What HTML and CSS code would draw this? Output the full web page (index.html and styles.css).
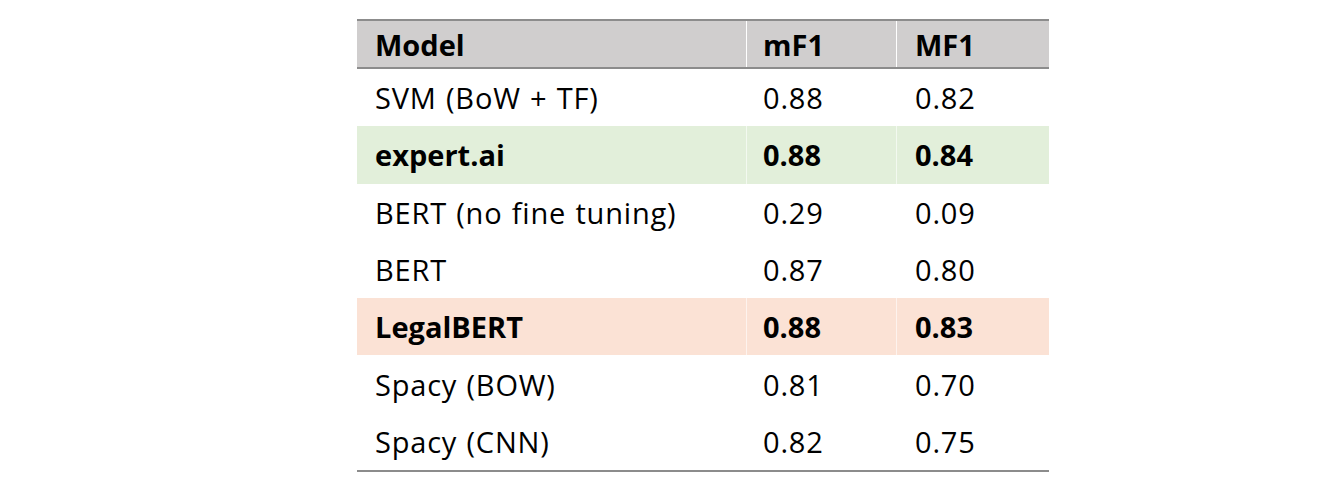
FILE: index.html
```html
<!DOCTYPE html>
<html>
<head>
<meta charset="utf-8">
<link rel="stylesheet" href="styles.css">
</head>
<body>
<div class="page">
  <table class="results">
    <thead>
      <tr><th class="c-model">Model</th><th class="c-m">mF1</th><th class="c-M">MF1</th></tr>
    </thead>
    <tbody>
      <tr><td>SVM (BoW + TF)</td><td class="c-m">0.88</td><td class="c-M">0.82</td></tr>
      <tr class="hl-green"><td>expert.ai</td><td class="c-m">0.88</td><td class="c-M">0.84</td></tr>
      <tr><td>BERT (no fine tuning)</td><td class="c-m">0.29</td><td class="c-M">0.09</td></tr>
      <tr><td>BERT</td><td class="c-m">0.87</td><td class="c-M">0.80</td></tr>
      <tr class="hl-pink"><td>LegalBERT</td><td class="c-m">0.88</td><td class="c-M">0.83</td></tr>
      <tr><td>Spacy (BOW)</td><td class="c-m">0.81</td><td class="c-M">0.70</td></tr>
      <tr><td>Spacy (CNN)</td><td class="c-m">0.82</td><td class="c-M">0.75</td></tr>
    </tbody>
  </table>
</div>
</body>
</html>
```

FILE: styles.css
```css
html, body {
  margin: 0;
  background: #ffffff;
}
.page {
  padding: 19px 0 0 357px;
}
.results {
  border-collapse: collapse;
  width: 692px;
  table-layout: fixed;
  font-family: "Open Sans", Lato, sans-serif;
  font-size: 29px;
  letter-spacing: 0.8px;
  word-spacing: 1px;
  color: #000;
  border-bottom: 2px solid #8c8c8c;
}
.results th, .results td {
  padding: 0 0 0 18px;
  text-align: left;
  vertical-align: middle;
  border-left: 1px solid #ffffff;
}
.results th:first-child, .results td:first-child {
  border-left: none;
}
.results thead tr {
  background: #d0cece;
  border-top: 2px solid #8c8c8c;
  border-bottom: 2px solid #8c8c8c;
}
.results th {
  font-weight: 700;
  letter-spacing: 0;
  height: 46px;
}
.results th.c-model { width: 371px; }
.results th.c-m { width: 133px; padding-left: 16px; }
.results td.c-m { padding-left: 16px; }
.results tbody tr { height: 57.3px; }
.results tbody td { height: 57.3px; }
.hl-green { background: #e2efda; }
.hl-pink { background: #fbe2d5; }
.hl-green td, .hl-pink td { font-weight: 700; letter-spacing: 0; }
.results tbody td { border-left-color: rgba(255,255,255,0.6); }
.results tbody tr:not(.hl-green):not(.hl-pink) td { border-left-color: #ffffff; }
```
